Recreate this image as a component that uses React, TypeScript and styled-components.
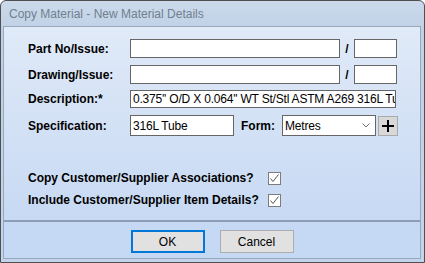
import React from "react";
import styled, { createGlobalStyle } from "styled-components";

const GlobalStyle = createGlobalStyle`
  html, body {
    margin: 0;
    padding: 0;
    background: #ffffff;
  }
  * {
    box-sizing: border-box;
  }
`;

const Window = styled.div`
  width: 425px;
  height: 263px;
  border: 1px solid #4f4f4f;
  border-radius: 6px 6px 0 0;
  background: linear-gradient(#cbd9ea, #bfd1e7 30px, #c3d5ec);
  padding: 0 3px 3px 2px;
  display: flex;
  flex-direction: column;
  font-family: "Liberation Sans", Arial, sans-serif;
`;

const TitleBar = styled.div`
  height: 25px;
  display: flex;
  align-items: center;
  padding-left: 6px;
  font-size: 12px;
  color: #717f8f;
`;

const Client = styled.div`
  flex: 1;
  border: 1px solid #9aa8bc;
  display: flex;
  flex-direction: column;
`;

const FormArea = styled.div`
  height: 193px;
  background: linear-gradient(#e0eaf8, #c7d9f3);
  padding: 12px 0 0 24px;
  display: flex;
  flex-direction: column;
`;

const Row = styled.div<{ $h: number; $gap: number }>`
  height: ${(p) => p.$h}px;
  margin-bottom: ${(p) => p.$gap}px;
  display: flex;
  align-items: center;
`;

const Label = styled.div<{ $w?: number }>`
  width: ${(p) => (p.$w ? `${p.$w}px` : "auto")};
  flex-shrink: 0;
  font-size: 12px;
  font-weight: bold;
  color: #000;
  white-space: nowrap;
`;

const TextBox = styled.div<{ $w: number }>`
  width: ${(p) => p.$w}px;
  height: 100%;
  background: #fff;
  border: 1px solid #666;
  font-size: 12px;
  color: #000;
  padding-left: 2px;
  display: flex;
  align-items: center;
  white-space: nowrap;
  overflow: hidden;
  letter-spacing: -0.2px;
`;

const Slash = styled.div`
  width: 14px;
  text-align: center;
  font-size: 12px;
  font-weight: bold;
`;

const FormLabel = styled(Label)`
  margin: 0 7px 0 7px;
`;

const Combo = styled(TextBox)`
  justify-content: space-between;
  padding-right: 5px;
`;

const PlusButton = styled.div`
  width: 20px;
  height: 20px;
  margin-left: 2px;
  background: #d8d8d8;
  border: 1px solid #a9a9a9;
  display: flex;
  align-items: center;
  justify-content: center;
`;

const CheckRow = styled.div`
  height: 22px;
  display: flex;
  align-items: center;
`;

const CheckBox = styled.div`
  width: 13px;
  height: 13px;
  background: #fff;
  border: 1px solid #7c7c7c;
  display: flex;
  align-items: center;
  justify-content: center;
`;

const Spacer = styled.div<{ $h: number }>`
  height: ${(p) => p.$h}px;
`;

const Divider = styled.div`
  height: 2px;
  background: #8d9db6;
`;

const ButtonBar = styled.div`
  flex: 1;
  background: #c5d9f5;
  display: flex;
  justify-content: center;
  padding-top: 8px;
  gap: 15px;
`;

const Button = styled.div<{ $default?: boolean }>`
  width: 74px;
  height: 23px;
  background: #e1e1e1;
  border: ${(p) => (p.$default ? "2px solid #0078d7" : "1px solid #adadad")};
  display: flex;
  align-items: center;
  justify-content: center;
  font-size: 12px;
  color: #000;
`;

const Check = () => (
  <svg width="11" height="11" viewBox="0 0 11 11">
    <polyline points="1.5,5.5 4,8.5 9.5,1.5" fill="none" stroke="#555" strokeWidth="1" />
  </svg>
);

const Chevron = () => (
  <svg width="8" height="5" viewBox="0 0 8 5">
    <polyline points="0.5,0.5 4,4 7.5,0.5" fill="none" stroke="#777" strokeWidth="1" />
  </svg>
);

const Plus = () => (
  <svg width="12" height="12" viewBox="0 0 12 12">
    <rect x="5" y="0" width="2" height="12" fill="#000" />
    <rect x="0" y="5" width="12" height="2" fill="#000" />
  </svg>
);

const App: React.FC = () => {
  return (
    <>
      <GlobalStyle />
      <Window>
        <TitleBar>Copy Material - New Material Details</TitleBar>
        <Client>
          <FormArea>
            <Row $h={19} $gap={7}>
              <Label $w={102}>Part No/Issue:</Label>
              <TextBox $w={210} />
              <Slash>/</Slash>
              <TextBox $w={43} />
            </Row>
            <Row $h={19} $gap={6}>
              <Label $w={102}>Drawing/Issue:</Label>
              <TextBox $w={210} />
              <Slash>/</Slash>
              <TextBox $w={43} />
            </Row>
            <Row $h={18} $gap={7}>
              <Label $w={102}>Description:*</Label>
              <TextBox $w={266}>0.375'' O/D X 0.064'' WT St/Stl ASTM A269 316L Tube</TextBox>
            </Row>
            <Row $h={21} $gap={0}>
              <Label $w={102}>Specification:</Label>
              <TextBox $w={104}>316L Tube</TextBox>
              <FormLabel>Form:</FormLabel>
              <Combo $w={94}>
                Metres
                <Chevron />
              </Combo>
              <PlusButton>
                <Plus />
              </PlusButton>
            </Row>
            <Spacer $h={31} />
            <CheckRow>
              <Label $w={240}>Copy Customer/Supplier Associations?</Label>
              <CheckBox>
                <Check />
              </CheckBox>
            </CheckRow>
            <CheckRow>
              <Label $w={240}>Include Customer/Supplier Item Details?</Label>
              <CheckBox>
                <Check />
              </CheckBox>
            </CheckRow>
          </FormArea>
          <Divider />
          <ButtonBar>
            <Button $default>OK</Button>
            <Button>Cancel</Button>
          </ButtonBar>
        </Client>
      </Window>
    </>
  );
};

export default App;
